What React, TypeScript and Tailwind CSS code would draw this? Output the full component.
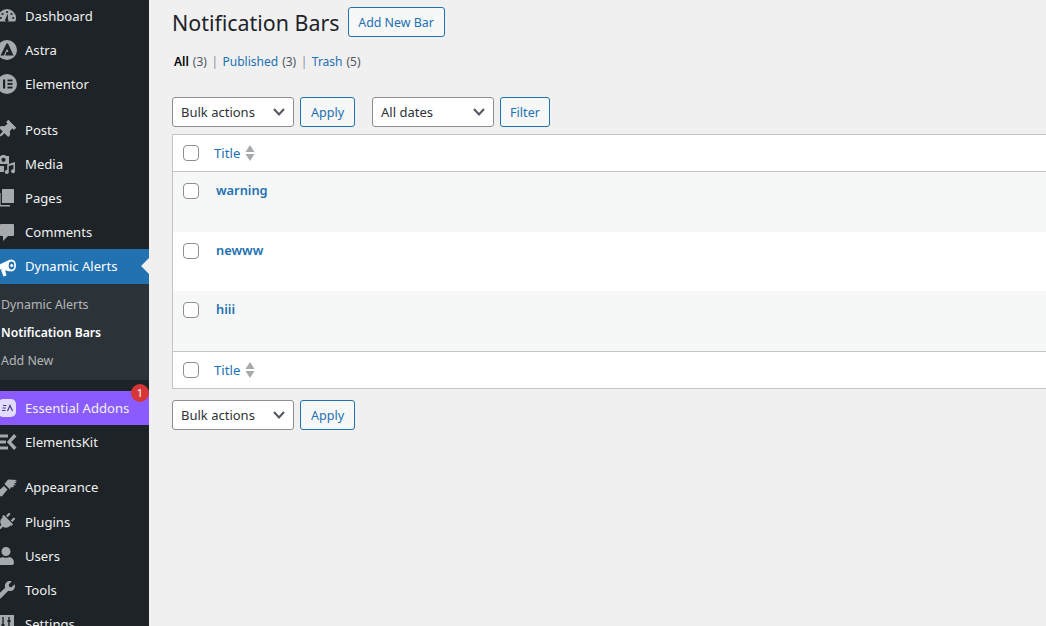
import type { ReactNode } from "react";
import { FaThumbtack, FaPlug, FaUser, FaWrench } from "react-icons/fa";

const Gauge = () => (
  <svg viewBox="0 0 20 20" className="w-5 h-5" fill="#a7aaad">
    <path d="M10 3a9 9 0 0 0-9 9c0 1.500.3 2.600.9 3.500h16.200c.6-.9.9-2 .9-3.500a9 9 0 0 0-9-9z" />
    <circle cx="10" cy="6" r="1.100" fill="#1d2327" />
    <circle cx="5.500" cy="8" r="1.100" fill="#1d2327" />
    <circle cx="14.500" cy="8" r="1.100" fill="#1d2327" />
    <circle cx="3.800" cy="12" r="1.100" fill="#1d2327" />
    <circle cx="16.200" cy="12" r="1.100" fill="#1d2327" />
    <path d="M10.800 7.500 11 13a1.700 1.700 0 1 1-2.600.2z" fill="#1d2327" />
  </svg>
);

const Astra = () => (
  <svg viewBox="0 0 20 20" className="w-5 h-5">
    <circle cx="10" cy="10" r="10" fill="#a7aaad" />
    <path d="M9.500 3.500 3.500 15.500h3.400L10 8.800l1.500 3.200H9.400l-1.200 3.500h8.300L11 3.500z" fill="#1d2327" />
  </svg>
);

const Elementor = () => (
  <svg viewBox="0 0 20 20" className="w-5 h-5">
    <circle cx="10" cy="10" r="10" fill="#a7aaad" />
    <rect x="6" y="5.500" width="2.200" height="9" fill="#1d2327" />
    <rect x="10.500" y="5.500" width="5" height="1.900" fill="#1d2327" />
    <rect x="10.500" y="9" width="5" height="1.900" fill="#1d2327" />
    <rect x="10.500" y="12.600" width="5" height="1.900" fill="#1d2327" />
  </svg>
);

const Media = () => (
  <svg viewBox="0 0 20 20" className="w-5 h-5" fill="#a7aaad">
    <path d="M1 2h3l1-1h3l1 1h3v8H1z" />
    <circle cx="6.500" cy="5.800" r="2.100" fill="#1d2327" />
    <path d="M18 8v9.200a2 2 0 1 1-1.600-2V10.800l-4.600 1.200v6a2 2 0 1 1-1.600-2v-5.500z" />
    <rect x="1" y="12" width="6" height="6" />
  </svg>
);

const Pages = () => (
  <svg viewBox="0 0 20 20" className="w-5 h-5" fill="#a7aaad">
    <path d="M5 1h12v14H5z" />
    <path d="M2 5h1.600v12H13v1.500H2z" />
  </svg>
);

const Comment = () => (
  <svg viewBox="0 0 20 20" className="w-5 h-5" fill="#a7aaad">
    <path d="M4 2h12a1 1 0 0 1 1 1v10a1 1 0 0 1-1 1h-5l-5 5v-5H4a1 1 0 0 1-1-1V3a1 1 0 0 1 1-1z" />
  </svg>
);

const Megaphone = () => (
  <svg viewBox="0 0 20 20" className="w-5 h-5">
    <path d="M1.500 8 13 2.500v12L1.500 12z" fill="#fff" />
    <path d="M4 13h4l1.500 5.500L6.500 19.500z" fill="#fff" />
    <ellipse cx="14.500" cy="8.500" rx="4.500" ry="6" fill="#fff" />
    <ellipse cx="14.500" cy="8.500" rx="2.800" ry="4" fill="#2271b1" />
    <circle cx="14.700" cy="8.500" r="1.500" fill="#fff" />
  </svg>
);

const Brush = () => (
  <svg viewBox="0 0 20 20" className="w-5 h-5" fill="#a7aaad">
    <path d="M3 12.500 7 9l3.500 3.500L6 18l-1 1.500-4-1z" />
    <path d="M7.500 7 11 2.500l9 .5-2 1.500 2 1-3 1 2 1.500-3 .5 1 1.500-3.500.5-.5 2z" />
  </svg>
);

const EssentialAddons = () => (
  <svg viewBox="0 0 18 18" className="w-[18px] h-[18px]">
    <rect width="18" height="18" rx="5" fill="#e4dcff" />
    <path d="M5 6.500h3.500M4.500 9H8M4 11.500h3.500" stroke="#4b3a88" strokeWidth="1.100" />
    <path d="M9.500 12 12 6.500 14.500 12" stroke="#4b3a88" strokeWidth="1.200" fill="none" />
  </svg>
);

const ElementsKit = () => (
  <svg viewBox="0 0 20 20" className="w-5 h-5" fill="#a7aaad">
    <rect x="0" y="2.500" width="11" height="3" />
    <rect x="0" y="8.500" width="9" height="3" />
    <rect x="0" y="14.500" width="11" height="3" />
    <path d="M17 2 19.500 4.500 14.300 10l5.200 5.500L17 18 9.800 10z" />
  </svg>
);

const Settings = () => (
  <svg viewBox="0 0 20 20" className="w-5 h-5" fill="#a7aaad">
    <path d="M1 1h16v18H1z" />
    <path d="M6 3v14M12 3v14" stroke="#1d2327" strokeWidth="1.400" />
    <path d="M4.500 11h3M10.500 7h3" stroke="#1d2327" strokeWidth="1.800" />
  </svg>
);

function MenuItem({ icon, label, gap }: { icon: ReactNode; label: string; gap?: boolean }) {
  return (
    <div className={`flex items-center h-[34px] shrink-0 ${gap ? "mt-3" : ""}`}>
      <span className="w-[25px] -ml-[3px] mr-[3px] flex items-center shrink-0 text-[#a7aaad] text-[18px]">{icon}</span>
      <span className="text-[13.100px] leading-[20px] text-[#f0f0f1]">{label}</span>
    </div>
  );
}

function Select({ label, w }: { label: string; w: string }) {
  return (
    <div className={`${w} h-[30px] bg-white border border-[#8c8f94] rounded-[3px] pl-2 pr-2 flex items-center justify-between text-[13px] leading-[20px] text-[#2c3338]`}>
      <span>{label}</span>
      <svg viewBox="2 4 12 8" className="w-3 h-2" fill="none" stroke="#50575e" strokeWidth="2">
        <path d="M3 5 8 10.500 13 5" />
      </svg>
    </div>
  );
}

function Button({ children, w }: { children: ReactNode; w: string }) {
  return (
    <div className={`${w} h-[30px] pt-[2px] bg-[#f6f7f7] border border-[#2271b1] rounded-[3px] flex items-center justify-center text-[12.600px] leading-[20px] text-[#2271b1]`}>
      {children}
    </div>
  );
}

function Check() {
  return <div className="w-4 h-4 bg-white border border-[#8c8f94] rounded-[4px] shrink-0" />;
}

function TitleRow({ className }: { className: string }) {
  return (
    <div className={`h-[37px] bg-white flex items-center pl-[10px] border-[#c3c4c7] ${className}`}>
      <Check />
      <span className="ml-[15px] text-[13.200px] leading-[20px] text-[#2271b1]">Title</span>
      <svg viewBox="0 0 10 16" className="ml-[5px] w-[10px] h-4" fill="#a7aaad">
        <path d="M5 0 9.500 7H.500z" />
        <path d="M.500 9h9L5 16z" />
      </svg>
    </div>
  );
}

function DataRow({ title, h, bg }: { title: string; h: string; bg: string }) {
  return (
    <div className={`${h} ${bg} flex items-start pl-[10px] pt-[11px]`}>
      <Check />
      <span className="ml-[17px] -mt-[2px] text-[12.800px] font-semibold leading-[18px] text-[#2271b1]">{title}</span>
    </div>
  );
}

export default function App() {
  return (
    <div className="h-screen overflow-hidden flex bg-[#f0f0f1] font-['Noto_Sans','Open_Sans',sans-serif]">
      <aside className="w-[149px] shrink-0 bg-[#1d2327] flex flex-col -mt-px overflow-hidden relative">
        <MenuItem icon={<Gauge />} label="Dashboard" />
        <MenuItem icon={<Astra />} label="Astra" />
        <MenuItem icon={<Elementor />} label="Elementor" />
        <MenuItem gap icon={<FaThumbtack className="rotate-45" />} label="Posts" />
        <MenuItem icon={<Media />} label="Media" />
        <MenuItem icon={<Pages />} label="Pages" />
        <MenuItem icon={<Comment />} label="Comments" />

        <div className="relative h-[35px] shrink-0 bg-[#2271b1] flex items-center">
          <span className="w-[25px] -ml-[3px] mr-[3px] flex shrink-0"><Megaphone /></span>
          <span className="pb-[2px] text-[13.100px] leading-[20px] text-white">Dynamic Alerts</span>
          <span className="absolute right-0 top-[9px] border-y-[8px] border-r-[8px] border-y-transparent border-r-[#f0f0f1]" />
        </div>
        <div className="h-[96px] shrink-0 bg-[#2c3338] pt-[7px] pl-[1px] text-[12.400px] text-[#c3c4c7] flex flex-col">
          <span className="h-[28px] leading-[28px] opacity-90">Dynamic Alerts</span>
          <span className="h-[28px] leading-[28px] text-[12.200px] text-white font-semibold">Notification Bars</span>
          <span className="h-[28px] leading-[28px] opacity-90">Add New</span>
        </div>

        <div className="relative mt-[11px] h-[34px] shrink-0 bg-[#8a5cff] flex items-center">
          <span className="w-[25px] -ml-[2px] mr-[2px] flex shrink-0"><EssentialAddons /></span>
          <span className="text-[13.100px] leading-[20px] text-[#f0f0f1]">Essential Addons</span>
          <span className="absolute right-0 -top-[7px] w-[18px] h-[18px] rounded-full bg-[#d63638] text-white text-[11px] flex items-center justify-center">1</span>
        </div>
        <MenuItem icon={<ElementsKit />} label="ElementsKit" />
        <div className="-mt-px" />
        <MenuItem gap icon={<Brush />} label="Appearance" />
        <div className="mt-px" />
        <MenuItem icon={<FaPlug className="rotate-45" />} label="Plugins" />
        <MenuItem icon={<FaUser />} label="Users" />
        <MenuItem icon={<FaWrench />} label="Tools" />
        <MenuItem icon={<Settings />} label="Settings" />
      </aside>

      <main className="flex-1 min-w-0 pl-[23px]">
        <div className="flex items-center h-[44px]">
          <h1 className="pt-[2px] text-[21.400px] leading-[30px] text-[#1d2327] font-normal">Notification Bars</h1>
          <div className="ml-[8px] w-[97px] h-[30px] pt-[2px] bg-[#f6f7f7] border border-[#2271b1] rounded-[3px] flex items-center justify-center text-[12.400px] leading-[20px] text-[#2271b1]">Add New Bar</div>
        </div>

        <div className="mt-[9px] pl-[2px] h-[18px] text-[12px] leading-[18px] text-[#50575e] flex items-center">
          <span className="font-semibold text-black">All</span>
          <span className="ml-1">(3)</span>
          <span className="mx-[4.500px] text-[#8c8f94]">|</span>
          <span className="text-[#2271b1]">Published</span>
          <span className="ml-1">(3)</span>
          <span className="mx-[4.500px] text-[#8c8f94]">|</span>
          <span className="text-[#2271b1]">Trash</span>
          <span className="ml-1">(5)</span>
        </div>

        <div className="mt-[26px] flex items-center">
          <Select label="Bulk actions" w="w-[122px]" />
          <div className="ml-[6px]"><Button w="w-[55px]">Apply</Button></div>
          <div className="ml-[17px]"><Select label="All dates" w="w-[122px]" /></div>
          <div className="ml-[6px]"><Button w="w-[50px]">Filter</Button></div>
        </div>

        <div className="mt-[7px] border-y border-l border-[#c3c4c7]">
          <TitleRow className="border-b" />
          <DataRow title="warning" h="h-[60px]" bg="bg-[#f6f7f7]" />
          <DataRow title="newww" h="h-[59px]" bg="bg-white" />
          <DataRow title="hiii" h="h-[60px]" bg="bg-[#f6f7f7]" />
          <TitleRow className="border-t" />
        </div>

        <div className="mt-[11px] flex items-center">
          <Select label="Bulk actions" w="w-[122px]" />
          <div className="ml-[6px]"><Button w="w-[55px]">Apply</Button></div>
        </div>
      </main>
    </div>
  );
}
